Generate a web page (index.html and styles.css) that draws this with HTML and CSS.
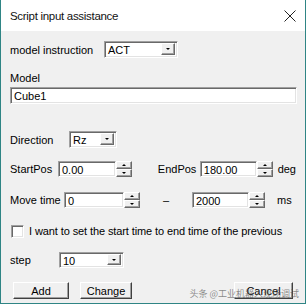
FILE: index.html
```html
<!DOCTYPE html>
<html lang="en">
<head>
  <meta charset="UTF-8">
  <title>Script input assistance</title>
  <link rel="stylesheet" href="styles.css">
</head>
<body>

<div class="window">
  <div class="titlebar">
    <span class="title">Script input assistance</span>
    <svg class="close" width="12" height="12" viewBox="0 0 12 12">
      <path d="M0.5 0.5 L11.5 11.5 M11.5 0.5 L0.5 11.5" stroke="#222" stroke-width="1" fill="none"/>
    </svg>
  </div>

  <div class="content">
    <div class="row row-model">
      <span class="label w-model">model instruction</span>
      <div class="combo w-act">
        <span class="combo-text">ACT</span>
        <span class="drop"><i class="arrow-down"></i></span>
      </div>
    </div>

    <div class="caption">Model</div>
    <div class="field wide">Cube1</div>

    <div class="row row-dir">
      <span class="label w-dir">Direction</span>
      <div class="combo w-rz">
        <span class="combo-text">Rz</span>
        <span class="drop"><i class="arrow-down"></i></span>
      </div>
    </div>

    <div class="row row-pos">
      <span class="label w-start">StartPos</span>
      <div class="field w-num1">0.00</div>
      <div class="spin"><span class="spin-btn"><i class="arrow-up"></i></span><span class="spin-btn"><i class="arrow-down"></i></span></div>
      <span class="label w-end">EndPos</span>
      <div class="field w-num2">180.00</div>
      <div class="spin"><span class="spin-btn"><i class="arrow-up"></i></span><span class="spin-btn"><i class="arrow-down"></i></span></div>
      <span class="unit">deg</span>
    </div>

    <div class="row row-time">
      <span class="label w-time">Move time</span>
      <div class="field w-num3">0</div>
      <div class="spin"><span class="spin-btn"><i class="arrow-up"></i></span><span class="spin-btn"><i class="arrow-down"></i></span></div>
      <span class="dash">&ndash;</span>
      <div class="field w-num4">2000</div>
      <div class="spin"><span class="spin-btn"><i class="arrow-up"></i></span><span class="spin-btn"><i class="arrow-down"></i></span></div>
      <span class="unit ms">ms</span>
    </div>

    <label class="check-row">
      <span class="checkbox"></span>
      <span class="check-text">I want to set the start time to end time of the previous</span>
    </label>

    <div class="row row-step">
      <span class="label w-step">step</span>
      <div class="combo w-10">
        <span class="combo-text">10</span>
        <span class="drop"><i class="arrow-down"></i></span>
      </div>
    </div>

    <div class="buttons">
      <button class="btn btn-add">Add</button>
      <button class="btn btn-change">Change</button>
      <button class="btn btn-cancel">Cancel</button>
    </div>

    <span class="watermark">头条 @工业机器人现场调试</span>
  </div>
</div>

</body>
</html>
```

FILE: styles.css
```css
* {
  box-sizing: border-box;
  margin: 0;
  padding: 0;
}

body {
  width: 306px;
  height: 304px;
  overflow: hidden;
  background: #f0f0f0;
  font-family: "Liberation Sans", Arial, sans-serif;
  font-size: 11px;
  color: #000;
}

.window {
  width: 306px;
  height: 304px;
  border: 1px solid #2f8585;
  border-top: none;
  display: flex;
  flex-direction: column;
  background: #f0f0f0;
}

.titlebar {
  height: 31px;
  background: #fff;
  display: flex;
  align-items: center;
  justify-content: space-between;
  padding: 0 8px 0 9px;
}

.title {
  font-family: "Liberation Sans", Arial, sans-serif;
  font-size: 11.5px;
  letter-spacing: -0.3px;
  color: #111;
}

.close {
  margin-right: 1px;
}

.content {
  position: relative;
  flex: 1;
  padding: 0 9px;
}

.row {
  display: flex;
  align-items: center;
  height: 17px;
}

.label {
  flex: none;
}

/* sunken 3d edit box */
.field,
.combo {
  height: 17px;
  background: #fff;
  border-top: 1px solid #a0a0a0;
  border-left: 1px solid #a0a0a0;
  border-right: 1px solid #fff;
  border-bottom: 1px solid #fff;
  box-shadow: inset 1px 1px 0 #696969, inset -1px -1px 0 #e3e3e3;
  padding: 2px 3px 0;
  line-height: 13px;
}

.combo {
  display: flex;
  align-items: stretch;
  padding: 2px 2px 2px 3px;
}

.combo-text {
  flex: 1;
}

.drop,
.spin-btn {
  background: #f0f0f0;
  border-top: 1px solid #fff;
  border-left: 1px solid #fff;
  border-right: 1px solid #696969;
  border-bottom: 1px solid #696969;
  box-shadow: inset -1px -1px 0 #a0a0a0;
  display: flex;
  align-items: center;
  justify-content: center;
}

.drop {
  width: 14px;
  margin-top: -1px;
}

.arrow-down,
.arrow-up {
  width: 0;
  height: 0;
  border-left: 2px solid transparent;
  border-right: 2px solid transparent;
}

.arrow-down {
  border-top: 2px solid #000;
}

.arrow-up {
  border-bottom: 2px solid #000;
}

.spin {
  display: flex;
  flex-direction: column;
  width: 16px;
  height: 16px;
}

.spin-btn {
  flex: 1;
}

.row-model {
  margin-top: 10px;
}

.w-model { width: 94px; }
.w-act { width: 74px; }

.caption {
  margin-top: 12px;
  height: 16px;
  line-height: 16px;
}

.wide {
  width: 287px;
  margin-top: 1px;
}

.row-dir {
  margin-top: 27px;
}

.w-dir { width: 59px; }
.w-rz { width: 48px; }

.row-pos {
  margin-top: 13px;
  height: 16px;
}

.row-pos .field,
.row-time .field {
  height: 16px;
}

.w-start { width: 48px; }
.w-num1 { width: 58px; }
.w-end { width: 42px; margin-left: 26px; }
.w-num2 { width: 57px; }

.unit {
  margin-left: 5px;
}

.row-time {
  margin-top: 15px;
  height: 16px;
}

.w-time { width: 54px; }
.w-num3 { width: 60px; }
.dash { width: 52px; text-align: center; }
.w-num4 { width: 57px; }
.ms { margin-left: 12px; }

.check-row {
  display: flex;
  align-items: center;
  margin-top: 16px;
  height: 14px;
  margin-left: 1px;
}

.checkbox {
  flex: none;
  width: 13px;
  height: 13px;
  background: #fff;
  border-top: 1px solid #a0a0a0;
  border-left: 1px solid #a0a0a0;
  border-right: 1px solid #fff;
  border-bottom: 1px solid #fff;
  box-shadow: inset 1px 1px 0 #696969, inset -1px -1px 0 #e3e3e3;
}

.check-text {
  margin-left: 5px;
  font-size: 11px;
  letter-spacing: -0.1px;
  white-space: nowrap;
}

.row-step {
  margin-top: 14px;
  height: 16px;
}

.w-step { width: 49px; }
.w-10 { width: 65px; height: 16px; }

.buttons {
  display: flex;
  margin-top: 14px;
  margin-left: 3px;
}

.btn {
  height: 17px;
  font-family: "Liberation Sans", Arial, sans-serif;
  font-size: 11px;
  background: #f0f0f0;
  border-top: 1px solid #fff;
  border-left: 1px solid #fff;
  border-right: 1px solid #404040;
  border-bottom: 1px solid #404040;
  box-shadow: inset -1px -1px 0 #a0a0a0;
  color: #000;
}

.btn-add { width: 56px; }
.btn-change { width: 52px; margin-left: 11px; }
.btn-cancel { width: 59px; margin-left: auto; margin-right: 3px; }

.watermark {
  position: absolute;
  right: 6px;
  bottom: 3px;
  font-family: "Noto Sans CJK SC", sans-serif;
  font-size: 9px;
  color: rgba(90, 90, 90, 0.7);
}
```
